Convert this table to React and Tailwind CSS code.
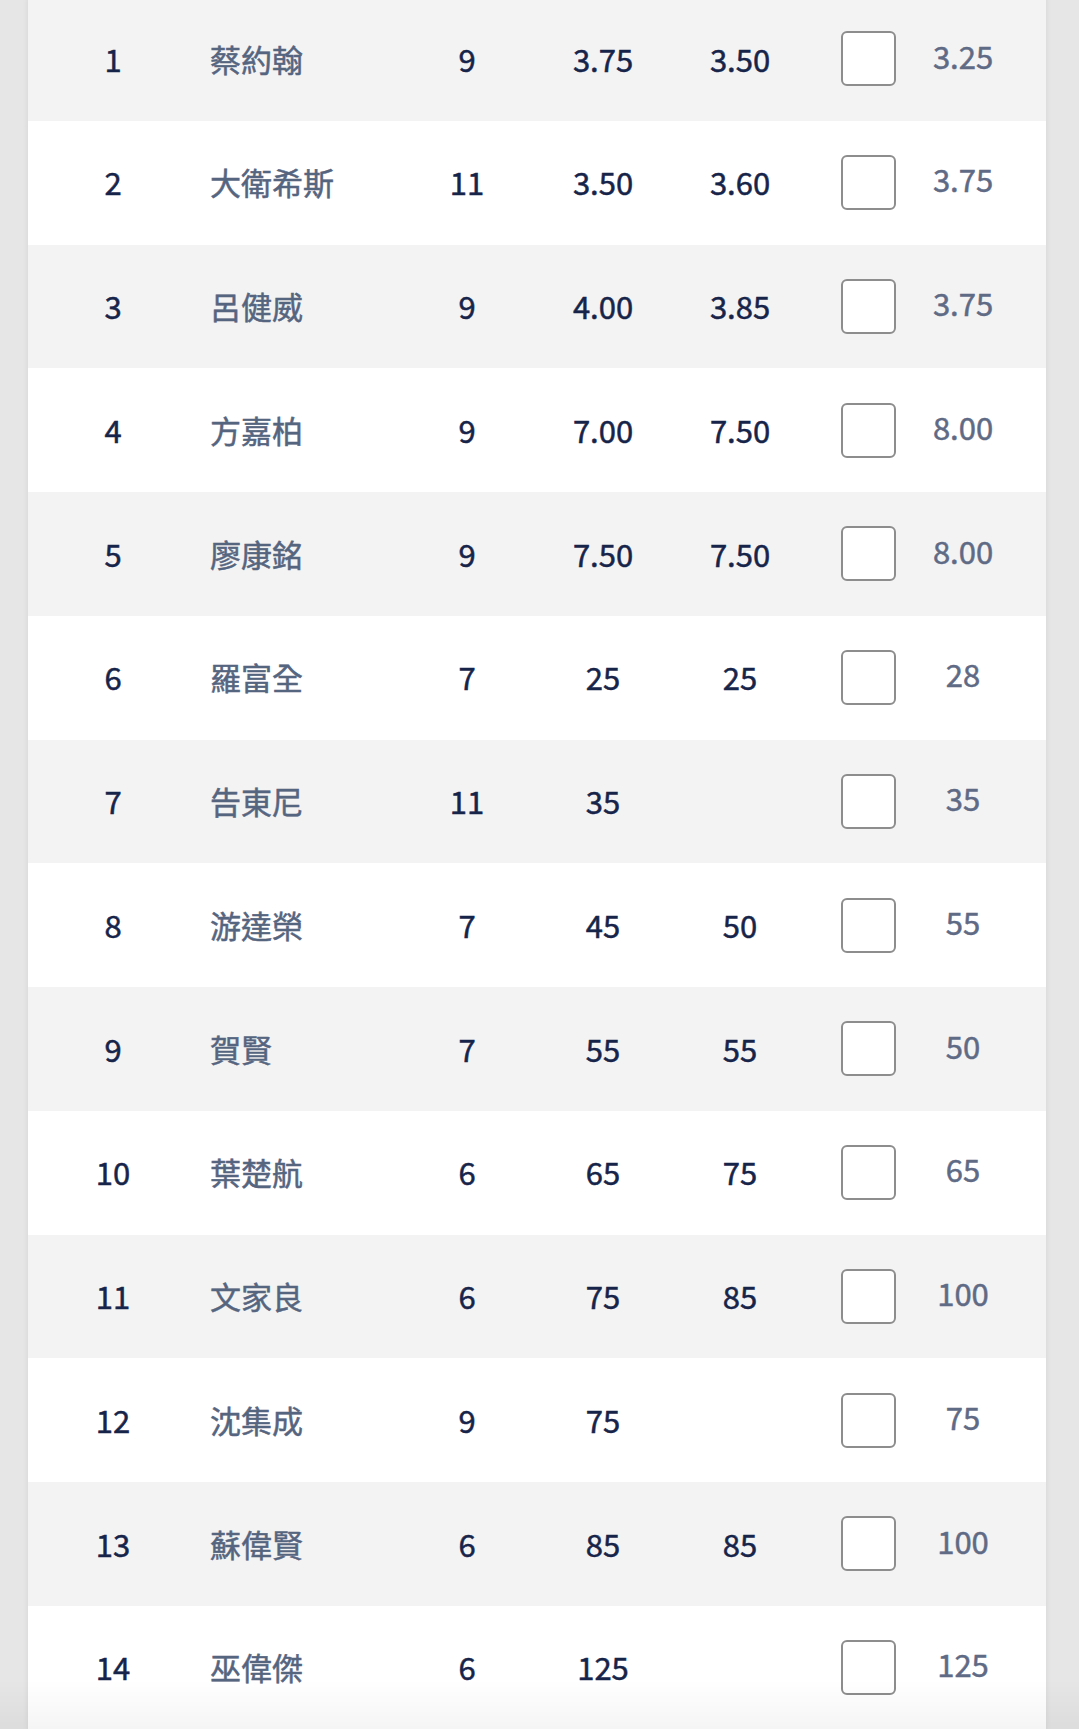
import React from 'react';

const rows = [
    { rank: 1, name: '蔡約翰', grade: '9', a: '3.75', b: '3.50', c: '3.25' },
    { rank: 2, name: '大衛希斯', grade: '11', a: '3.50', b: '3.60', c: '3.75' },
    { rank: 3, name: '呂健威', grade: '9', a: '4.00', b: '3.85', c: '3.75' },
    { rank: 4, name: '方嘉柏', grade: '9', a: '7.00', b: '7.50', c: '8.00' },
    { rank: 5, name: '廖康銘', grade: '9', a: '7.50', b: '7.50', c: '8.00' },
    { rank: 6, name: '羅富全', grade: '7', a: '25', b: '25', c: '28' },
    { rank: 7, name: '告東尼', grade: '11', a: '35', b: '', c: '35' },
    { rank: 8, name: '游達榮', grade: '7', a: '45', b: '50', c: '55' },
    { rank: 9, name: '賀賢', grade: '7', a: '55', b: '55', c: '50' },
    { rank: 10, name: '葉楚航', grade: '6', a: '65', b: '75', c: '65' },
    { rank: 11, name: '文家良', grade: '6', a: '75', b: '85', c: '100' },
    { rank: 12, name: '沈集成', grade: '9', a: '75', b: '', c: '75' },
    { rank: 13, name: '蘇偉賢', grade: '6', a: '85', b: '85', c: '100' },
    { rank: 14, name: '巫偉傑', grade: '6', a: '125', b: '', c: '125' },
];

export default function App() {
    return (
        <div className="min-h-screen bg-[#e6e6e6] overflow-hidden font-['Noto_Sans_CJK_TC','Noto_Sans',sans-serif]">
            <div className="ml-[28px] mr-[33px] -mt-[3px] bg-white shadow-[0_0_6px_rgba(0,0,0,0.08)]">
                {rows.map((r, i) => (
                    <div
                        key={r.rank}
                        className={`grid grid-cols-[170px_210px_118px_154px_120px_103px_120px] items-center h-[123.75px] text-[31px] [-webkit-text-stroke:0.5px_currentColor] ${i % 2 === 0 ? 'bg-[#f3f3f3]' : 'bg-white'}`}
                    >
                        <div className="text-center text-[#17244a]">{r.rank}</div>
                        <div className="pl-[12px] text-[#56657f] whitespace-nowrap">{r.name}</div>
                        <div className="text-center text-[#17244a]">{r.grade}</div>
                        <div className="text-center text-[#17244a]">{r.a}</div>
                        <div className="text-center text-[#17244a]">{r.b}</div>
                        <div className="flex pl-[41px]">
                            <div className="w-[55px] h-[55px] shrink-0 bg-white border-[2.5px] border-[#8d8d8d] rounded-[6px]"></div>
                        </div>
                        <div className="text-center text-[#5f6a85] pb-[6px]">{r.c}</div>
                    </div>
                ))}
            </div>
            {/* bottom fade */}
            <div className="pointer-events-none fixed bottom-0 inset-x-0 h-[50px] bg-gradient-to-b from-transparent to-[rgba(0,0,0,0.04)]"></div>
        </div>
    );
}
